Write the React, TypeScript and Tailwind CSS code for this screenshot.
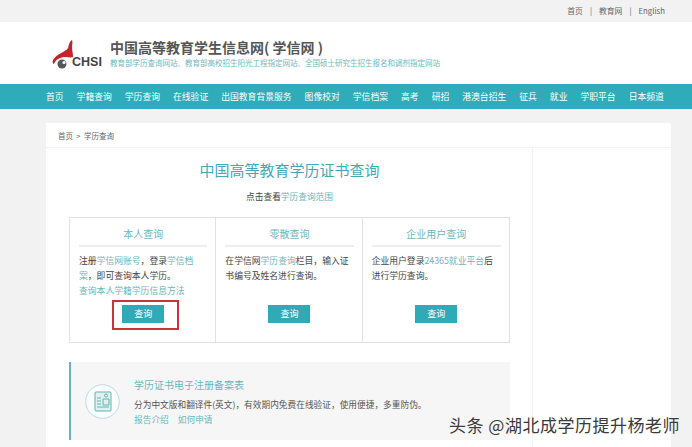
const cjk = "font-['Noto_Sans_CJK_SC',sans-serif]";

const navItems = ["首页", "学籍查询", "学历查询", "在线验证", "出国教育背景服务", "图像校对", "学信档案", "高考", "研招", "港澳台招生", "征兵", "就业", "学职平台", "日本频道"];

const Link = ({ children }: { children: React.ReactNode }) => <span className="text-[#6cb6bd]">{children}</span>;

const Logo = () => (
  <div className="flex items-end w-[58px] h-[30px] shrink-0">
    <svg width="22" height="30" viewBox="0 0 22 30" className="shrink-0">
      <path d="M20 1 C17 3 17 6 16 9 C14 13 5 14 1 21 C0 23 1 25 2 25 C4 20 9 18 13 18 C16 18 19 19 21 18 C21 14 20 11 20 8 C20 5 21 3 20 1 Z" fill="#c8232c" />
      <circle cx="10" cy="25" r="4.5" fill="#55585a" />
      <circle cx="12" cy="23.5" r="1.5" fill="#ffffff" />
    </svg>
    <span className="-ml-[2px] text-[12.5px] leading-[14px] font-bold text-[#444] font-['Liberation_Sans',sans-serif]">CHSI</span>
  </div>
);

const QueryCol = ({ title, last, children }: { title: string; last?: boolean; children: React.ReactNode }) => (
  <div className={`w-[147px] h-full pl-[9px] pr-[8px] ${last ? "" : "border-r border-[#e2e2e2]"}`}>
    <div className="h-[29px] border-b-2 border-[#eeeeee] text-center text-[10px] leading-[31px] text-[#6cb6bd]">{title}</div>
    <div className="h-[51px] pt-[6px] text-[8.8px] leading-[15px] text-[#444]">{children}</div>
    <div className="relative mx-auto mt-[7px] w-[42px] h-[18px] bg-[#2fabb7] text-center text-[9px] leading-[18px] text-white">
      查询
      {title === "本人查询" && <div className="absolute left-[-10px] top-[-5px] w-[67px] h-[30px] border-2 border-[#c8343c]" />}
    </div>
  </div>
);

const DocIcon = () => (
  <svg width="35" height="35" viewBox="0 0 35 35" className="shrink-0">
    <circle cx="17.5" cy="17.5" r="16.8" fill="#fbfdfd" stroke="#b9dcdc" strokeWidth="1" />
    <rect x="10" y="8" width="16" height="19" rx="1" fill="#dff0ef" stroke="#5fb5b3" strokeWidth="1" />
    <path d="M12 14h4M12 17h4M12 20h4M12 23h12" stroke="#5fb5b3" strokeWidth="1" />
    <circle cx="21" cy="11.5" r="1.5" fill="none" stroke="#5fb5b3" strokeWidth="1" />
    <path d="M18 15h6v6h-6z" fill="none" stroke="#5fb5b3" strokeWidth="1" />
  </svg>
);

export default function App() {
  return (
    <div className={`relative w-[692px] h-[447px] overflow-hidden bg-[#f2f2f2] ${cjk}`}>
      <div className="h-[22px] flex items-center justify-end gap-[7px] pr-[27px] text-[7.8px] text-[#666]">
        <span>首页</span>
        <span>|</span>
        <span>教育网</span>
        <span>|</span>
        <span>English</span>
      </div>

      <div className="h-[62px] bg-white flex items-center pl-[52px] pt-[2px]">
        <Logo />
        <div className="-mt-[3px]">
          <div className="text-[14px] leading-[18px] font-bold text-[#555]">中国高等教育学生信息网( 学信网 )</div>
          <div className="mt-[2px] text-[7.5px] leading-[10px] text-[#72b7bd]">教育部学历查询网站、教育部高校招生阳光工程指定网站、全国硕士研究生招生报名和调剂指定网站</div>
        </div>
      </div>

      <div className="h-[25px] bg-[#2eacb9] flex items-center gap-[13px] pl-[46px] text-[8.8px] text-white">
        {navItems.map((item) => (
          <span key={item}>{item}</span>
        ))}
      </div>

      <div className="ml-[46px] mt-[14px] w-[625px] bg-white h-[340px]">
        <div className="h-[25px] border-b border-[#f2f2f2] pl-[12px] text-[7.5px] leading-[25px] text-[#666]">首页 &nbsp;&gt;&nbsp; 学历查询</div>
        <div className="flex">
          <div className="w-[487px] h-[315px] border-r border-[#f2f2f2] pl-[23px]">
            <div className="w-[441px] pt-[11px] text-center text-[15px] leading-[22px] text-[#3fa9b5]">中国高等教育学历证书查询</div>
            <div className="w-[441px] mt-[9px] text-center text-[8.7px] leading-[14px] text-[#444]">
              点击查看<Link>学历查询范围</Link>
            </div>
            <div className="mt-[13px] w-[441px] h-[126px] border border-[#e2e2e2] flex">
              <QueryCol title="本人查询">
                注册<Link>学信网账号</Link>，登录<Link>学信档案</Link>，即可查询本人学历。
                <br />
                <Link>查询本人学籍学历信息方法</Link>
              </QueryCol>
              <QueryCol title="零散查询">
                在学信网<Link>学历查询</Link>栏目，输入证书编号及姓名进行查询。
              </QueryCol>
              <QueryCol title="企业用户查询" last>
                企业用户登录<Link>24365就业平台</Link>后进行学历查询。
              </QueryCol>
            </div>
            <div className="mt-[19px] w-[441px] h-[78px] bg-[#f6f6f6] border-l-2 border-[#63b5b9] flex pl-[14px]">
              <div className="mt-[22px]">
                <DocIcon />
              </div>
              <div className="ml-[14px] pt-[16px]">
                <div className="text-[10px] leading-[14px] text-[#6cb6bd]">学历证书电子注册备案表</div>
                <div className="mt-[6px] text-[8.7px] leading-[14px] text-[#555]">分为中文版和翻译件(英文)，有效期内免费在线验证，使用便捷，多重防伪。</div>
                <div className="mt-[1px] flex gap-[9px] text-[8.7px] leading-[14px] text-[#6cb6bd]">
                  <span>报告介绍</span>
                  <span>如何申请</span>
                </div>
              </div>
            </div>
          </div>
        </div>
      </div>

      <div className="absolute left-[449px] top-[414px] text-[17px] leading-[22px] tracking-[0.5px] whitespace-nowrap text-[#3a3a3a]">头条 @湖北成学历提升杨老师</div>
    </div>
  );
}
